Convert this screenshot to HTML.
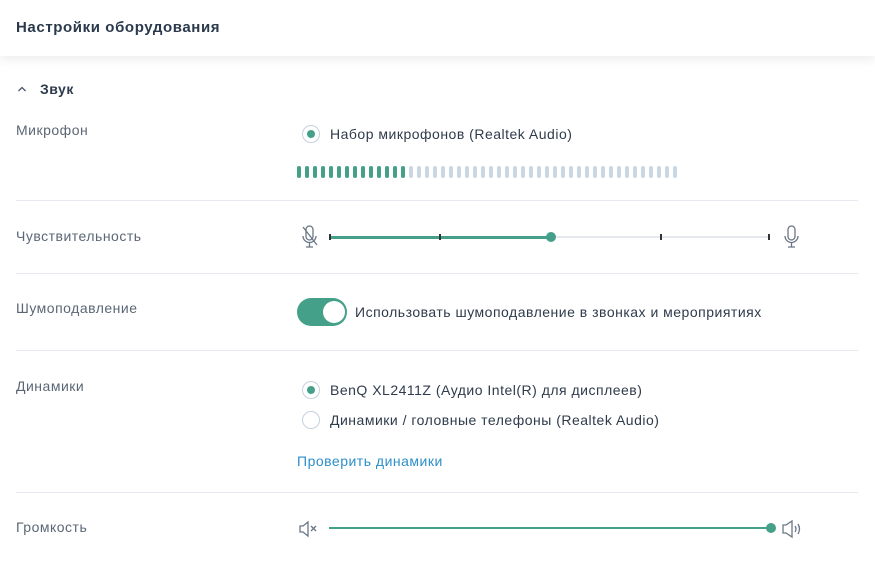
<!DOCTYPE html><html><head><meta charset="utf-8"><style>
body{margin:0;width:875px;height:565px;background:#fff;font-family:"Liberation Sans",sans-serif;color:#2e3b4b;overflow:hidden;position:relative}
.hdr{position:absolute;left:0;top:0;width:875px;height:56px;background:#fff;box-shadow:0 4px 10px rgba(0,0,0,.07)}
.hdr span{position:absolute;left:16px;top:19px;font-size:15px;font-weight:bold;color:#2a3a4c;letter-spacing:.6px}
.a{position:absolute;font-size:14px;white-space:nowrap;letter-spacing:.5px}
.lbl{color:#5b6776;left:16px}
.hr{position:absolute;left:16px;width:842px;height:1px;background:#e6eaf0}
.rad{position:absolute;width:18px;height:18px;border:1px solid #c5d1dd;border-radius:50%;box-sizing:border-box;background:#fff}
.rad.on::after{content:"";position:absolute;left:4px;top:4px;width:8px;height:8px;border-radius:50%;background:#45a08a}
.bar{position:absolute;top:166px;width:4px;height:12px;border-radius:2px}
</style></head><body>
<div class="hdr"><span>Настройки оборудования</span></div>
<svg style="position:absolute;left:17px;top:85px" width="10" height="8" viewBox="0 0 10 8" fill="none" stroke="#4a5566" stroke-width="1.3"><path d="M1.5 6L5 2.5 8.5 6"/></svg>
<div class="a" style="left:40px;top:81px;font-weight:bold;font-size:14px">Звук</div>
<div class="a lbl" style="top:122px">Микрофон</div>
<div class="rad on" style="left:302px;top:125px"></div>
<div class="a" style="left:330px;top:126px">Набор микрофонов (Realtek Audio)</div>
<div id="bars"></div>
<div class="hr" style="top:200px"></div>
<div class="a lbl" style="top:228px">Чувствительность</div>
<svg style="position:absolute;left:300px;top:224px" width="20" height="26" viewBox="0 0 20 26" fill="none" stroke="#6b7685" stroke-width="1.3"><rect x="6" y="2" width="7" height="14" rx="3.5"/><path d="M3 12a6.5 6.5 0 0 0 13 0M9.5 19v4M6 23h7M3 3l14 18"/></svg>
<div style="position:absolute;left:329px;top:236px;width:222px;height:3px;background:#45a08a"></div>
<div style="position:absolute;left:551px;top:236px;width:219px;height:2px;background:#e6eaf0"></div>
<div style="position:absolute;left:329px;top:234px;width:2px;height:6px;background:#333"></div>
<div style="position:absolute;left:439px;top:234px;width:2px;height:6px;background:#333"></div>
<div style="position:absolute;left:660px;top:234px;width:2px;height:6px;background:#333"></div>
<div style="position:absolute;left:768px;top:234px;width:2px;height:6px;background:#333"></div>
<div style="position:absolute;left:546px;top:232px;width:10px;height:10px;border-radius:50%;background:#45a08a"></div>
<svg style="position:absolute;left:782px;top:224px" width="20" height="26" viewBox="0 0 20 26" fill="none" stroke="#6b7685" stroke-width="1.3"><rect x="6" y="2" width="7" height="14" rx="3.5"/><path d="M3 12a6.5 6.5 0 0 0 13 0M9.5 19v4M6 23h7"/></svg>
<div class="hr" style="top:273px"></div>
<div class="a lbl" style="top:300px">Шумоподавление</div>
<div style="position:absolute;left:297px;top:298px;width:50px;height:28px;border-radius:14px;background:#45a08a"></div>
<div style="position:absolute;left:323px;top:301px;width:22px;height:22px;border-radius:50%;background:#fff"></div>
<div class="a" style="left:355px;top:304px">Использовать шумоподавление в звонках и мероприятиях</div>
<div class="hr" style="top:350px"></div>
<div class="a lbl" style="top:378px">Динамики</div>
<div class="rad on" style="left:302px;top:381px"></div>
<div class="a" style="left:330px;top:382px">BenQ XL2411Z (Аудио Intel(R) для дисплеев)</div>
<div class="rad" style="left:302px;top:411px"></div>
<div class="a" style="left:330px;top:412px">Динамики / головные телефоны (Realtek Audio)</div>
<div class="a" style="left:297px;top:453px;color:#2d8fc9">Проверить динамики</div>
<div class="hr" style="top:492px"></div>
<div class="a lbl" style="top:519px">Громкость</div>
<svg style="position:absolute;left:298px;top:520px" width="22" height="18" viewBox="0 0 22 18" fill="none" stroke="#6b7685" stroke-width="1.3"><path d="M2 6h3l5-4v14l-5-4H2z M13 6l5 5M18 6l-5 5"/></svg>
<div style="position:absolute;left:329px;top:527px;width:443px;height:2px;background:#45a08a"></div>
<div style="position:absolute;left:766px;top:523px;width:10px;height:10px;border-radius:50%;background:#45a08a"></div>
<svg style="position:absolute;left:781px;top:519px" width="22" height="20" viewBox="0 0 22 20" fill="none" stroke="#6b7685" stroke-width="1.3"><path d="M2 6h3l6-4v16l-6-4H2z M14 7q2 3 0 6M17 5q3 5 0 10"/></svg>
<script>
var h='';for(var i=0;i<48;i++){var x=297+i*8;h+='<div class="bar" style="left:'+x+'px;background:'+(i<14?'#45a08a':'#c9d6e3')+'"></div>';}
document.getElementById('bars').innerHTML=h;
</script>
</body></html>
